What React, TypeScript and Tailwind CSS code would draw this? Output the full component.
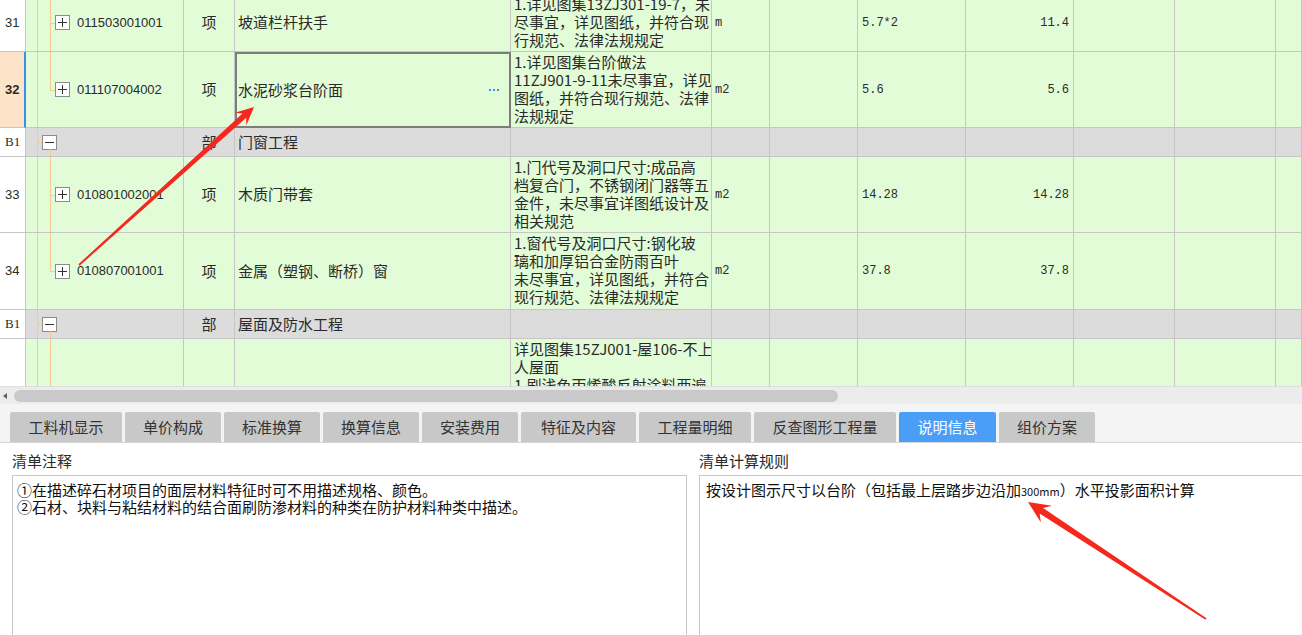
import React from 'react';

const COLS =
  'grid grid-cols-[26px_158px_51px_276px_201px_58px_88px_108px_108px_101px_101px_26px]';
const cell = 'border-r border-b border-[#c6c6c6]';
const green = 'bg-[#e2fcd8]';
const gray = 'bg-[#dcdcdc]';
const treeLine = 'bg-[#f6c98c]';

type ItemRow = {
  kind: 'item';
  num: string;
  h: string;
  code: string;
  name: string;
  desc: string[];
  unit: string;
  expr: string;
  qty: string;
  last?: boolean;
  active?: boolean;
};
type GroupRow = { kind: 'group'; name: string };
type TailRow = { kind: 'tail'; desc: string[] };
type Row = ItemRow | GroupRow | TailRow;

const rows: Row[] = [
  {
    kind: 'item',
    num: '31',
    h: 'h-[58px]',
    code: '011503001001',
    name: '坡道栏杆扶手',
    desc: ['1.详见图集13ZJ301-19-7，未', '尽事宜，详见图纸，并符合现', '行规范、法律法规规定'],
    unit: 'm',
    expr: '5.7*2',
    qty: '11.4',
  },
  {
    kind: 'item',
    num: '32',
    h: 'h-[76px]',
    code: '011107004002',
    name: '水泥砂浆台阶面',
    desc: ['1.详见图集台阶做法', '11ZJ901-9-11未尽事宜，详见', '图纸，并符合现行规范、法律', '法规规定'],
    unit: 'm2',
    expr: '5.6',
    qty: '5.6',
    last: true,
    active: true,
  },
  { kind: 'group', name: '门窗工程' },
  {
    kind: 'item',
    num: '33',
    h: 'h-[76px]',
    code: '010801002001',
    name: '木质门带套',
    desc: ['1.门代号及洞口尺寸:成品高', '档复合门，不锈钢闭门器等五', '金件，未尽事宜详图纸设计及', '相关规范'],
    unit: 'm2',
    expr: '14.28',
    qty: '14.28',
  },
  {
    kind: 'item',
    num: '34',
    h: 'h-[77px]',
    code: '010807001001',
    name: '金属（塑钢、断桥）窗',
    desc: ['1.窗代号及洞口尺寸:钢化玻', '璃和加厚铝合金防雨百叶', '未尽事宜，详见图纸，并符合', '现行规范、法律法规规定'],
    unit: 'm2',
    expr: '37.8',
    qty: '37.8',
    last: true,
  },
  { kind: 'group', name: '屋面及防水工程' },
  {
    kind: 'tail',
    desc: ['详见图集15ZJ001-屋106-不上', '人屋面', '1.刷浅色丙烯酸反射涂料两遍'],
  },
];

const tabs = [
  { label: '工料机显示', w: 'w-[112px]' },
  { label: '单价构成', w: 'w-[96px]' },
  { label: '标准换算', w: 'w-[96px]' },
  { label: '换算信息', w: 'w-[96px]' },
  { label: '安装费用', w: 'w-[96px]' },
  { label: '特征及内容', w: 'w-[115px]' },
  { label: '工程量明细', w: 'w-[112px]' },
  { label: '反查图形工程量', w: 'w-[142px]' },
  { label: '说明信息', w: 'w-[97px]', active: true },
  { label: '组价方案', w: 'w-[96px]' },
];

const TreeBox = ({ plus }: { plus?: boolean }) => (
  <svg width="15" height="15" viewBox="0 0 15 15" className="shrink-0">
    <rect x="0.5" y="0.5" width="14" height="14" fill="#fff" stroke="#8c8c8c" />
    <line x1="3" y1="7.5" x2="12" y2="7.5" stroke="#333" />
    {plus && <line x1="7.5" y1="3" x2="7.5" y2="12" stroke="#333" />}
  </svg>
);

const EmptyCells = ({ bg, count }: { bg: string; count: number }) => (
  <>
    {Array.from({ length: count }).map((_, i) => (
      <div key={i} className={`${cell} ${bg}`} />
    ))}
  </>
);

function Item({ r }: { r: ItemRow }) {
  return (
    <div className={`${COLS} ${r.h}`}>
      <div
        className={`flex items-center pl-[5px] text-[13px] font-['Liberation_Sans'] border-b border-[#c6c6c6] ${
          r.active ? 'bg-[#fde3c8] font-bold border-r-2 border-r-[#3a8ee6]' : 'bg-white border-r'
        }`}
      >
        {r.num}
      </div>
      <div className={`${cell} ${green} relative`}>
        <span className={`absolute left-[11px] top-0 bottom-0 w-px ${treeLine}`} />
        <span className={`absolute left-[24px] top-0 w-px ${treeLine} ${r.last ? 'h-1/2' : 'bottom-0'}`} />
        <span className={`absolute left-[24px] top-1/2 w-[5px] h-px ${treeLine}`} />
        <div className="flex h-full items-center pl-[29px] gap-[7px]">
          <TreeBox plus />
          <span className="font-['Liberation_Sans'] text-[13px]">{r.code}</span>
        </div>
      </div>
      <div className={`${cell} ${green} flex items-center justify-center text-[15px]`}>项</div>
      {r.active ? (
        <div className={`border-2 border-[#7d7d7d] ${green} flex items-center justify-between pl-[1px] pr-[10px] text-[15px]`}>
          <span>{r.name}</span>
          <span className="flex gap-[2px]">
            <span className="w-[2px] h-[2px] bg-[#3d8fe2]" />
            <span className="w-[2px] h-[2px] bg-[#3d8fe2]" />
            <span className="w-[2px] h-[2px] bg-[#3d8fe2]" />
          </span>
        </div>
      ) : (
        <div className={`${cell} ${green} flex items-center pl-[3px] text-[15px]`}>{r.name}</div>
      )}
      <div className={`${cell} ${green} pl-[3px] pt-[1px] text-[15px] leading-[18px] overflow-hidden`}>
        {r.desc.map((d) => (
          <div key={d} className="whitespace-nowrap">
            {d}
          </div>
        ))}
      </div>
      <div className={`${cell} ${green} flex items-center pl-[3px] font-['Liberation_Mono'] text-[12px]`}>{r.unit}</div>
      <div className={`${cell} ${green}`} />
      <div className={`${cell} ${green} flex items-center pl-[4px] font-['Liberation_Mono'] text-[12px]`}>{r.expr}</div>
      <div className={`${cell} ${green} flex items-center justify-end pr-[4px] font-['Liberation_Mono'] text-[12px]`}>
        {r.qty}
      </div>
      <EmptyCells bg={green} count={3} />
    </div>
  );
}

function Group({ r }: { r: GroupRow }) {
  return (
    <div className={`${COLS} h-[29px]`}>
      <div className={`${cell} bg-white flex items-center pl-[5px] text-[13px] font-['Liberation_Serif']`}>B1</div>
      <div className={`${cell} ${gray} relative`}>
        <span className={`absolute left-[11px] top-0 bottom-0 w-px ${treeLine}`} />
        <span className={`absolute left-[11px] top-1/2 w-[5px] h-px ${treeLine}`} />
        <span className={`absolute left-[24px] top-[21px] bottom-0 w-px ${treeLine}`} />
        <div className="flex h-full items-center pl-[16px]">
          <TreeBox />
        </div>
      </div>
      <div className={`${cell} ${gray} flex items-center justify-center text-[15px]`}>部</div>
      <div className={`${cell} ${gray} flex items-center pl-[3px] text-[15px]`}>{r.name}</div>
      <EmptyCells bg={gray} count={8} />
    </div>
  );
}

function Tail({ r }: { r: TailRow }) {
  return (
    <div className={`${COLS} h-[100px]`}>
      <div className={`${cell} bg-white`} />
      <div className={`${cell} ${green} relative`}>
        <span className={`absolute left-[11px] top-0 bottom-0 w-px ${treeLine}`} />
        <span className={`absolute left-[24px] top-0 bottom-0 w-px ${treeLine}`} />
      </div>
      <div className={`${cell} ${green}`} />
      <div className={`${cell} ${green}`} />
      <div className={`${cell} ${green} pl-[3px] pt-[1px] text-[15px] leading-[18px] overflow-hidden`}>
        {r.desc.map((d) => (
          <div key={d} className="whitespace-nowrap">
            {d}
          </div>
        ))}
      </div>
      <EmptyCells bg={green} count={7} />
    </div>
  );
}

export default function App() {
  return (
    <div className="relative w-[1302px] h-[635px] overflow-hidden bg-white text-[#2a2a2a] font-['Noto_Sans_CJK_SC',sans-serif]">
      {/* grid */}
      <div className="h-[386px] overflow-hidden">
        <div className="-mt-[6px]">
          {rows.map((r, i) =>
            r.kind === 'item' ? (
              <Item key={i} r={r} />
            ) : r.kind === 'group' ? (
              <Group key={i} r={r} />
            ) : (
              <Tail key={i} r={r} />
            ),
          )}
        </div>
      </div>

      {/* horizontal scrollbar */}
      <div className="h-[18px] bg-[#ececec] border-t border-[#dedede] flex items-center">
        <svg width="14" height="10" viewBox="0 0 14 10" className="shrink-0">
          <polygon points="3,5 7,2 7,8" fill="#606060" />
        </svg>
        <div className="w-[824px] h-[12px] rounded-full bg-[#c9c9c9]" />
      </div>

      {/* tabs */}
      <div className="h-[39px] bg-[#f4f4f4] border-b border-[#d6d6d6] flex items-end gap-[3px] px-[10px]">
        {tabs.map((t) => (
          <div
            key={t.label}
            className={`${t.w} h-[30px] flex items-center justify-center rounded-t-[2px] text-[15px] ${
              t.active ? 'bg-[#4a9ef6] text-white' : 'bg-[#c8c8c8] text-[#333]'
            }`}
          >
            {t.label}
          </div>
        ))}
      </div>

      {/* info panels */}
      <div className="flex gap-[12px] pl-[12px]">
        <div className="w-[675px] shrink-0 flex flex-col">
          <div className="pt-[8px] text-[15px] leading-[20px]">清单注释</div>
          <div className="mt-[4px] h-[200px] border border-[#c8c8c8] pl-[4px] pt-[5px] text-[15px] leading-[17px] text-[#111]">
            <div className="whitespace-nowrap">①在描述碎石材项目的面层材料特征时可不用描述规格、颜色。</div>
            <div className="whitespace-nowrap">②石材、块料与粘结材料的结合面刷防渗材料的种类在防护材料种类中描述。</div>
          </div>
        </div>
        <div className="w-[640px] shrink-0 flex flex-col">
          <div className="pt-[8px] text-[15px] leading-[20px]">清单计算规则</div>
          <div className="mt-[4px] h-[200px] border border-[#c8c8c8] pl-[6px] pt-[5px] text-[15px] leading-[17px] text-[#111]">
            <div className="whitespace-nowrap">
              按设计图示尺寸以台阶（包括最上层踏步边沿加<span className="text-[11px]">300mm</span>）水平投影面积计算
            </div>
          </div>
        </div>
      </div>

      {/* red annotation arrows */}
      <svg
        className="absolute left-0 top-0 pointer-events-none"
        width="1302"
        height="635"
        viewBox="0 0 1302 635"
      >
        <polygon
          points="254,107 246.3,125.4 246.2,117.8 79.6,265.7 78.4,264.3 242.5,113.6 234.9,112.8"
          fill="#f5281d"
        />
        <polygon
          points="1028,502 1051.9,505.7 1043.1,508.1 1206.5,618.3 1205.5,619.8 1039.6,513.5 1040.9,522.4"
          fill="#f5281d"
        />
      </svg>
    </div>
  );
}
